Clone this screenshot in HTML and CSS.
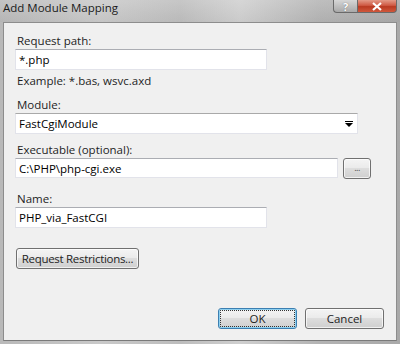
FILE: index.html
```html
<!DOCTYPE html>
<html lang="en">
<head>
    <meta charset="UTF-8">
    <title>Add Module Mapping</title>
    <link rel="stylesheet" href="styles.css">
</head>
<body>
    <div class="window">
        <div class="titlebar">
            <span class="title">Add Module Mapping</span>
            <div class="controls">
                <span class="ctl help">?</span>
                <span class="ctl close">
                    <svg width="12" height="9" viewBox="0 0 12 9">
                        <path d="M2 1 L10 8 M10 1 L2 8" stroke="#fff" stroke-width="2.2"/>
                    </svg>
                </span>
            </div>
        </div>
        <div class="client">
            <form class="mapping-form">
                <label class="lbl first" for="path">Request path:</label>
                <input class="field short" type="text" id="path" value="*.php">
                <div class="hint">Example: *.bas, wsvc.axd</div>

                <label class="lbl" for="module">Module:</label>
                <div class="combo">
                    <span>FastCgiModule</span>
                    <svg width="8" height="6" viewBox="0 0 8 6">
                        <path d="M0 0 H8 V1 H0 Z M0 2 H8 L4 6 Z" fill="#000"/>
                    </svg>
                </div>

                <label class="lbl exec" for="exe">Executable (optional):</label>
                <div class="row">
                    <input class="field long" type="text" id="exe" value="C:\PHP\php-cgi.exe">
                    <button type="button" class="btn browse">...</button>
                </div>

                <label class="lbl name" for="name">Name:</label>
                <input class="field short" type="text" id="name" value="PHP_via_FastCGI">

                <button type="button" class="btn restrict">Request Restrictions...</button>

                <div class="footer">
                    <button type="submit" class="btn ok">OK</button>
                    <button type="button" class="btn">Cancel</button>
                </div>
            </form>
        </div>
    </div>
</body>
</html>
```

FILE: styles.css
```css
body, .window, .titlebar, .client, label, input, button {
    font-family: "Open Sans", "Noto Sans", sans-serif;
    margin: 0;
    padding: 0;
}

body {
    background-color: #a0a0a0;
}

.window {
    width: 400px;
    height: 344px;
    display: flex;
    flex-direction: column;
    background: linear-gradient(90deg, #b9b9b9 0%, #c9c9c9 25%, #bdbdbd 45%, #cfcfcf 60%, #b3b3b3 80%, #a9a9a9 100%);
    box-sizing: border-box;
}

.titlebar {
    height: 22px;
    display: flex;
    justify-content: space-between;
    align-items: flex-start;
    background: linear-gradient(180deg, rgba(255,255,255,0.15), rgba(0,0,0,0.02));
}

.title {
    font-size: 11.5px;
    color: #1a1a1a;
    padding: 0 0 0 3px;
    line-height: 16px;
}

.controls {
    display: flex;
    margin-right: 3px;
}

.ctl {
    height: 13px;
    display: flex;
    align-items: center;
    justify-content: center;
    border: 1px solid #6a6a6a;
    border-top: none;
    box-sizing: border-box;
}

.help {
    width: 24px;
    border-radius: 0 0 0 4px;
    border-right: none;
    background: linear-gradient(180deg, #d6d6d6, #a9a9a9);
    color: #fff;
    font-size: 11px;
    font-weight: bold;
    text-shadow: 0 0 1px #555;
}

.close {
    width: 40px;
    border-radius: 0 0 4px 0;
    background: linear-gradient(180deg, #e39a88 0%, #cf5a44 45%, #b93a22 55%, #d0583c 100%);
}

.client {
    flex: 1;
    margin: 0 3px 3px 3px;
    background-color: #f0f0f0;
    border: 1px solid #8d8d8d;
    border-bottom-color: #7a7a7a;
    padding: 0 11px 11px 11px;
    display: flex;
}

.mapping-form {
    flex: 1;
    display: flex;
    flex-direction: column;
    align-items: flex-start;
    font-size: 11.5px;
    color: #1e1e1e;
}

.lbl {
    display: block;
    font-size: 11.5px;
    line-height: 15px;
    margin: 9px 0 1px 2px;
    color: #1e1e1e;
}

.lbl.first {
    margin-top: 10px;
}

.lbl.exec {
    margin-top: 8px;
}

.lbl.name {
    margin-top: 12px;
}

.field {
    height: 21px;
    box-sizing: border-box;
    border: 1px solid #e2e3ea;
    border-top-color: #abadb3;
    background: #fff;
    font-size: 11.5px;
    padding: 0 3px;
    color: #000;
    outline: none;
}

.field.short {
    width: 252px;
}

.field.long {
    width: 323px;
    height: 20px;
}

.hint {
    font-size: 11.5px;
    line-height: 15px;
    margin: 3px 0 0 2px;
}

.combo {
    width: 343px;
    height: 21px;
    box-sizing: border-box;
    border: 1px solid #e2e3ea;
    border-top-color: #a9a9a9;
    background: #fff;
    display: flex;
    align-items: center;
    justify-content: space-between;
    padding: 0 4px 0 3px;
    font-size: 11.5px;
    color: #000;
}

.row {
    display: flex;
    align-items: flex-start;
    gap: 5px;
}

.btn {
    height: 21px;
    box-sizing: border-box;
    border: 1px solid #707070;
    border-radius: 3px;
    background: linear-gradient(180deg, #f4f4f4 0%, #ebebeb 45%, #dddddd 50%, #cfcfcf 100%);
    font-size: 11.5px;
    color: #1e1e1e;
    white-space: nowrap;
    box-shadow: inset 0 0 0 1px rgba(255,255,255,0.7);
}

.browse {
    width: 28px;
    height: 21px;
    font-size: 9px;
    line-height: 9px;
    padding-bottom: 3px;
    letter-spacing: -0.5px;
    color: #4a4a4a;
}

.restrict {
    width: 123px;
    margin-top: 20px;
    margin-left: 1px;
    letter-spacing: -0.3px;
}

.footer {
    margin-top: auto;
    align-self: flex-end;
    display: flex;
    gap: 8px;
    margin-right: 1px;
}

.footer .btn {
    width: 79px;
}

.btn.ok {
    border-color: #3c7fb1;
    box-shadow: inset 0 0 0 1px #8ed0f0;
    outline: 1px dotted #333;
    outline-offset: -3px;
}
```
